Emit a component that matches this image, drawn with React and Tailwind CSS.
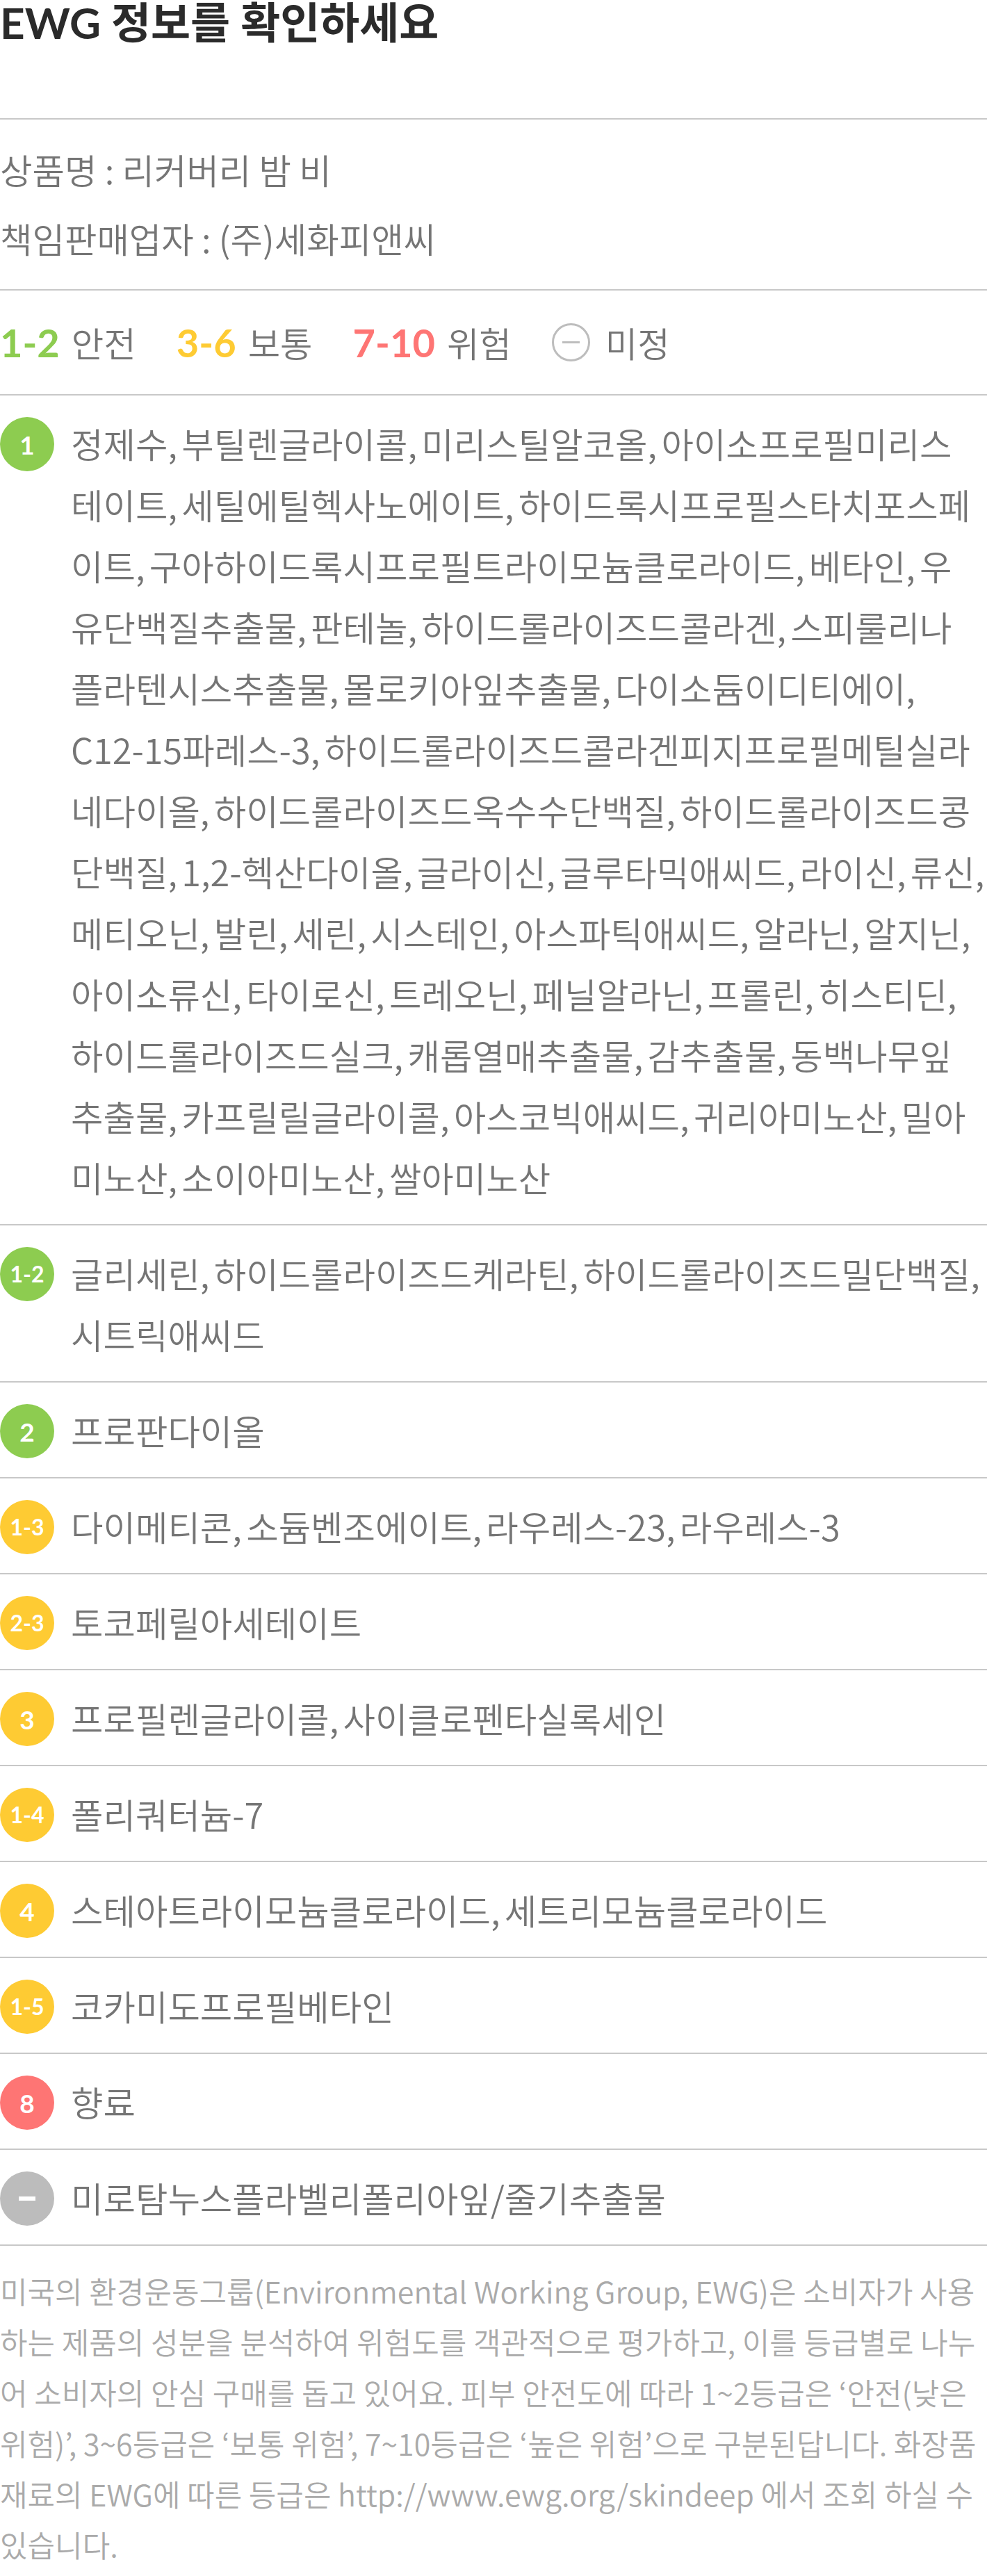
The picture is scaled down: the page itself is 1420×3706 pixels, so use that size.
import { Fragment } from 'react'

const rows = [
  {
    grade: '1',
    tone: 'green',
    text: '정제수, 부틸렌글라이콜, 미리스틸알코올, 아이소프로필미리스테이트, 세틸에틸헥사노에이트, 하이드록시프로필스타치포스페이트, 구아하이드록시프로필트라이모늄클로라이드, 베타인, 우유단백질추출물, 판테놀, 하이드롤라이즈드콜라겐, 스피룰리나플라텐시스추출물, 몰로키아잎추출물, 다이소듐이디티에이, C12-15파레스-3, 하이드롤라이즈드콜라겐피지프로필메틸실라네다이올, 하이드롤라이즈드옥수수단백질, 하이드롤라이즈드콩단백질, 1,2-헥산다이올, 글라이신, 글루타믹애씨드, 라이신, 류신, 메티오닌, 발린, 세린, 시스테인, 아스파틱애씨드, 알라닌, 알지닌, 아이소류신, 타이로신, 트레오닌, 페닐알라닌, 프롤린, 히스티딘, 하이드롤라이즈드실크, 캐롭열매추출물, 감추출물, 동백나무잎추출물, 카프릴릴글라이콜, 아스코빅애씨드, 귀리아미노산, 밀아미노산, 소이아미노산, 쌀아미노산',
  },
  { grade: '1-2', tone: 'green', text: '글리세린, 하이드롤라이즈드케라틴, 하이드롤라이즈드밀단백질, 시트릭애씨드' },
  { grade: '2', tone: 'green', text: '프로판다이올' },
  { grade: '1-3', tone: 'yellow', text: '다이메티콘, 소듐벤조에이트, 라우레스-23, 라우레스-3' },
  { grade: '2-3', tone: 'yellow', text: '토코페릴아세테이트' },
  { grade: '3', tone: 'yellow', text: '프로필렌글라이콜, 사이클로펜타실록세인' },
  { grade: '1-4', tone: 'yellow', text: '폴리쿼터늄-7' },
  { grade: '4', tone: 'yellow', text: '스테아트라이모늄클로라이드, 세트리모늄클로라이드' },
  { grade: '1-5', tone: 'yellow', text: '코카미도프로필베타인' },
  { grade: '8', tone: 'red', text: '향료' },
  { grade: null, tone: 'gray', text: '미로탐누스플라벨리폴리아잎/줄기추출물' },
]

const toneBg = {
  green: 'bg-[#8dcc50]',
  yellow: 'bg-[#fecb33]',
  red: 'bg-[#fe7574]',
  gray: 'bg-[#bcbcbc]',
}

// separators a little tighter than the font's own comma + space
function IngredientText({ text }) {
  const names = text.split(', ')
  return names.map((name, i) => (
    <Fragment key={i}>
      {name}
      {i < names.length - 1 && <span className="tracking-[-2.5px]">, </span>}
    </Fragment>
  ))
}

function Badge({ grade, tone }) {
  return (
    <span
      className={`mt-[7px] flex h-[78px] w-[78px] shrink-0 items-center justify-center rounded-full ${toneBg[tone]} font-['Lato',sans-serif] font-bold text-white`}
    >
      {grade === null ? (
        <span className="block h-[6px] w-[24px] bg-white" />
      ) : (
        <span className={grade.length > 1 ? 'text-[32px] leading-none' : 'text-[37px] leading-none'}>{grade}</span>
      )}
    </span>
  )
}

function Legend() {
  const items = [
    { range: '1-2', label: '안전', color: 'text-[#8dcc50]' },
    { range: '3-6', label: '보통', color: 'text-[#fecb33]' },
    { range: '7-10', label: '위험', color: 'text-[#fe7574]' },
  ]

  return (
    <div className="flex h-[151px] items-center gap-[58px] border-t-2 border-[#c8c8c8]">
      {items.map((item) => (
        <span key={item.range} className="flex items-center gap-[17px]">
          <span className={`font-['Lato',sans-serif] text-[56px] font-bold leading-none ${item.color}`}>{item.range}</span>
          <span className="text-[50.5px] leading-none">{item.label}</span>
        </span>
      ))}
      <span className="flex items-center gap-[22px]">
        <span className="flex h-[55px] w-[55px] items-center justify-center rounded-full border-[3px] border-[#bdbdbd]">
          <span className="block h-[3px] w-[25px] bg-[#bdbdbd]" />
        </span>
        <span className="text-[50.5px] leading-none">미정</span>
      </span>
    </div>
  )
}

export default function App() {
  return (
    <div className="w-[1420px] bg-white font-['Noto_Sans_CJK_KR_DemiLight','Noto_Sans_CJK_KR',sans-serif] font-light text-[#757575]">
      <h2 className="h-[170px] font-['Lato','Noto_Sans_CJK_KR',sans-serif] text-[62px] font-bold leading-[64px] text-[#2b2b2b]">
        EWG 정보를 확인하세요
      </h2>

      <div className="flex flex-col gap-[11px] border-t-2 border-[#c8c8c8] pt-[27px] pb-[30px] text-[50.5px] leading-[88px]">
        <p>상품명 : 리커버리 밤 비</p>
        <p>책임판매업자 : (주)세화피앤씨</p>
      </div>

      <Legend />

      <ul>
        {rows.map((row) => (
          <li key={row.text} className="flex items-start gap-6 border-t-2 border-[#c8c8c8] py-6">
            <Badge grade={row.grade} tone={row.tone} />
            <p className="min-w-0 flex-1 pr-[5px] text-[50.5px] leading-[88px]">
              <IngredientText text={row.text} />
            </p>
          </li>
        ))}
      </ul>

      <p className="border-t-2 border-[#c8c8c8] pt-[28px] text-[43px] leading-[73px] text-[#aaaaaa]">
        미국의 환경운동그룹(Environmental Working Group, EWG)은 소비자가 사용하는 제품의 성분을 분석하여 위험도를 객관적으로 평가하고, 이를 등급별로 나누어 소비자의 안심 구매를 돕고 있어요. 피부 안전도에 따라 1~2등급은 ‘안전(낮은 위험)’, 3~6등급은 ‘보통 위험’, 7~10등급은 ‘높은 위험’으로 구분된답니다. 화장품 재료의 EWG에 따른 등급은 http://www.ewg.org/skindeep 에서 조회 하실 수 있습니다.
      </p>
    </div>
  )
}
